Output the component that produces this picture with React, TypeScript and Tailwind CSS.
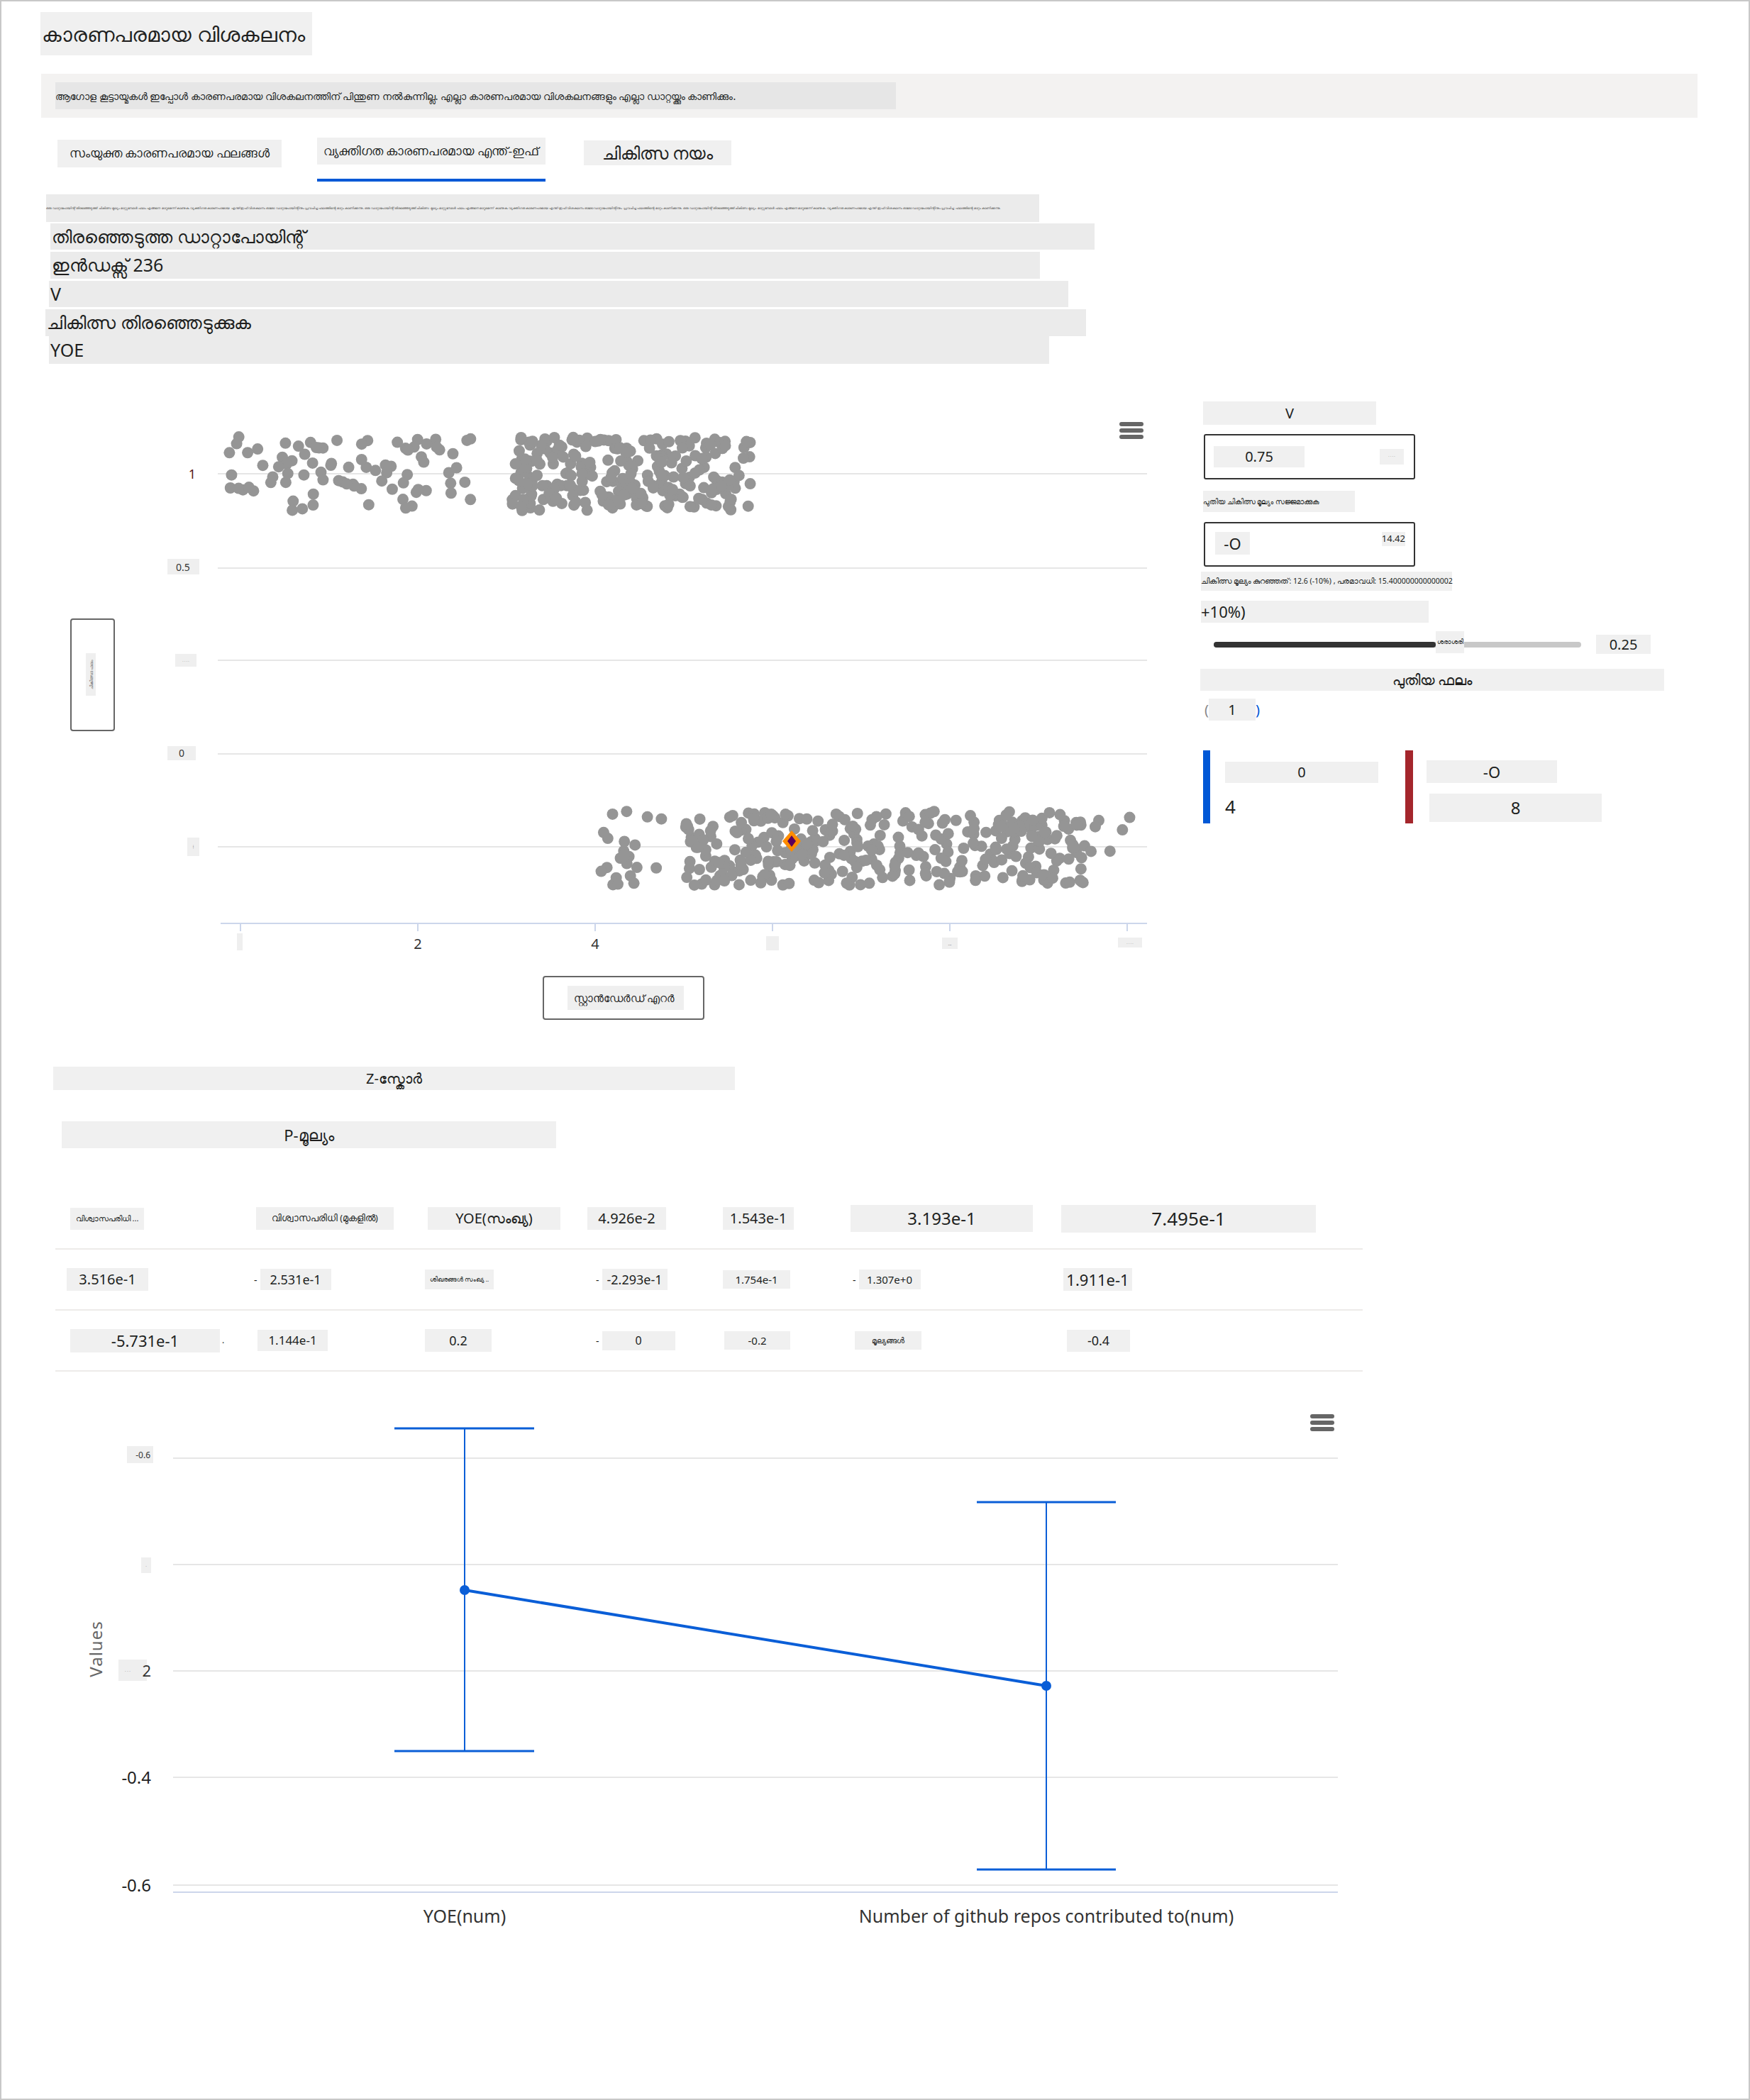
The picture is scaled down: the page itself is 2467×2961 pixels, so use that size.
import React from 'react';

const GRAY = 'bg-[#f0f0f0]';

function rng(seed: number) {
  let s = seed;
  return () => {
    s = (s * 1664525 + 1013904223) % 4294967296;
    return s / 4294967296;
  };
}

type Pt = { x: number; y: number };

function cluster(seed: number, n: number, x0: number, x1: number, yc: number, spread: number): Pt[] {
  const r = rng(seed);
  const out: Pt[] = [];
  for (let i = 0; i < n; i++) {
    out.push({ x: x0 + r() * (x1 - x0), y: yc + (r() - 0.5) * 2 * spread });
  }
  return out;
}

const points: Pt[] = [
  ...cluster(11, 85, 312, 670, 668, 52),
  ...cluster(23, 250, 722, 1058, 668, 52),
  ...cluster(37, 22, 846, 960, 1196, 52),
  ...cluster(41, 330, 960, 1530, 1196, 52),
  ...cluster(53, 6, 1530, 1604, 1190, 40),
];

function Hamburger({ x, y }: { x: number; y: number }) {
  return (
    <g fill="#666">
      <rect x={x} y={y} width={34} height={6} rx={3} />
      <rect x={x} y={y + 9} width={34} height={6} rx={3} />
      <rect x={x} y={y + 18} width={34} height={6} rx={3} />
    </g>
  );
}

function ScatterChart() {
  const grid = [668, 801, 931, 1063, 1194];
  const ticks = [339, 589, 839, 1089, 1339, 1589];
  return (
    <svg width={1580} height={890} viewBox="60 560 1580 890" className="shrink-0">
      {grid.map((g) => (
        <line key={g} x1={307} x2={1617} y1={g} y2={g} stroke="#e6e6e6" strokeWidth={2} />
      ))}
      <line x1={311} x2={1617} y1={1302} y2={1302} stroke="#ccd6eb" strokeWidth={2} />
      {ticks.map((t) => (
        <line key={t} x1={t} x2={t} y1={1302} y2={1313} stroke="#ccd6eb" strokeWidth={2} />
      ))}
      {/* y labels */}
      <text x={276} y={675} fontSize={18} fill="#5a1a1a" textAnchor="end">1</text>
      <rect x={236} y={788} width={45} height={22} fill="#efefef" />
      <text x={258} y={805} fontSize={14} fill="#333" textAnchor="middle">0.5</text>
      <rect x={247} y={922} width={30} height={18} fill="#efefef" />
      <text x={262} y={934} fontSize={5} fill="#555" textAnchor="middle">· · · ·</text>
      <rect x={236} y={1052} width={40} height={20} fill="#efefef" />
      <text x={256} y={1067} fontSize={14} fill="#333" textAnchor="middle">0</text>
      <rect x={264} y={1181} width={17} height={26} fill="#efefef" />
      <text x={272} y={1196} fontSize={5} fill="#555" textAnchor="middle" transform="rotate(-90 272 1194)">····</text>
      {/* x labels */}
      <rect x={334} y={1316} width={8} height={24} fill="#efefef" />
      <text x={589} y={1338} fontSize={20} fill="#333" textAnchor="middle">2</text>
      <text x={839} y={1338} fontSize={20} fill="#333" textAnchor="middle">4</text>
      <rect x={1080} y={1320} width={18} height={20} fill="#efefef" />
      <rect x={1328} y={1322} width={22} height={16} fill="#efefef" />
      <text x={1339} y={1333} fontSize={6} fill="#555" textAnchor="middle">...</text>
      <rect x={1576} y={1322} width={34} height={14} fill="#efefef" />
      <text x={1593} y={1332} fontSize={5} fill="#555" textAnchor="middle">· · · ·</text>
      {/* points */}
      {points.map((p, i) => (
        <circle key={i} cx={p.x} cy={p.y} r={8} fill="#959595" />
      ))}
      <polygon points="1116,1171 1129,1186 1116,1201 1103,1186" fill="#ff8c00" />
      <polygon points="1116,1178 1122,1186 1116,1194 1110,1186" fill="#5c005c" />
      {/* y axis title box */}
      <rect x={100} y={873} width={61} height={157} rx={3} fill="#fff" stroke="#666" strokeWidth={2} />
      <rect x={121} y={921} width={14} height={60} fill="#efefef" />
      <text x={131} y={951} fontSize={6} fill="#555" textAnchor="middle" transform="rotate(-90 131 951)">
        ചികിത്സാ ഫലം
      </text>
      {/* x axis title box */}
      <rect x={766} y={1377} width={226} height={60} rx={3} fill="#fff" stroke="#666" strokeWidth={2} />
      <rect x={800} y={1390} width={164} height={34} fill="#efefef" />
      <text x={880} y={1413} fontSize={15} fill="#222" textAnchor="middle">സ്റ്റാൻഡേർഡ് എറർ</text>
      <Hamburger x={1578} y={595} />
    </svg>
  );
}

function ErrorChart() {
  const grid = [2058, 2208, 2358, 2508, 2660];
  const blue = '#0a5ed7';
  return (
    <svg width={1860} height={780} viewBox="80 1960 1860 780" className="shrink-0">
      {grid.map((g) => (
        <line key={g} x1={244} x2={1886} y1={g} y2={g} stroke="#e6e6e6" strokeWidth={2} />
      ))}
      <line x1={244} x2={1886} y1={2670} y2={2670} stroke="#ccd6eb" strokeWidth={2} />
      <rect x={179} y={2041} width={37} height={24} fill="#efefef" />
      <text x={212} y={2058} fontSize={12} fill="#333" textAnchor="end">-0.6</text>
      <rect x={199} y={2198} width={14} height={22} fill="#efefef" />
      <text x={206} y={2212} fontSize={6} fill="#555" textAnchor="middle">·</text>
      <rect x={167} y={2342} width={40} height={30} fill="#efefef" />
      <text x={180} y={2360} fontSize={6} fill="#555" textAnchor="middle">· · ·</text>
      <text x={213} y={2366} fontSize={22} fill="#333" textAnchor="end">2</text>
      <text x={213} y={2517} fontSize={24} fill="#222" textAnchor="end">-0.4</text>
      <text x={213} y={2669} fontSize={24} fill="#222" textAnchor="end">-0.6</text>
      <text x={144} y={2327} fontSize={24} fill="#666" textAnchor="middle" letterSpacing={1} transform="rotate(-90 144 2327)">
        Values
      </text>
      {/* error bars */}
      <line x1={655} x2={655} y1={2016} y2={2471} stroke={blue} strokeWidth={2} />
      <line x1={556} x2={753} y1={2016} y2={2016} stroke={blue} strokeWidth={3} />
      <line x1={556} x2={753} y1={2471} y2={2471} stroke={blue} strokeWidth={3} />
      <line x1={1475} x2={1475} y1={2120} y2={2638} stroke={blue} strokeWidth={2} />
      <line x1={1377} x2={1573} y1={2120} y2={2120} stroke={blue} strokeWidth={3} />
      <line x1={1377} x2={1573} y1={2638} y2={2638} stroke={blue} strokeWidth={3} />
      <line x1={655} x2={1475} y1={2244} y2={2379} stroke={blue} strokeWidth={4} />
      <circle cx={655} cy={2244} r={7} fill={blue} />
      <circle cx={1475} cy={2379} r={7} fill={blue} />
      <text x={655} y={2713} fontSize={25} fill="#333" textAnchor="middle">YOE(num)</text>
      <text x={1475} y={2713} fontSize={25} fill="#333" textAnchor="middle">Number of github repos contributed to(num)</text>
      <Hamburger x={1847} y={1996} />
    </svg>
  );
}

function RightPanel() {
  return (
    <div className="ml-[52px] flex w-[660px] flex-col pt-[6px] text-[#201f1e]">
      <div className={`ml-[4px] flex h-[33px] w-[244px] items-center justify-center ${GRAY} text-[20px]`}>V</div>
      <div className="ml-[5px] mt-[13px] flex h-[64px] w-[298px] items-center justify-between rounded-[3px] border-2 border-[#333]">
        <div className={`ml-[12px] flex h-[30px] w-[128px] items-center justify-center ${GRAY} text-[20px]`}>0.75</div>
        <div className={`mr-[14px] flex h-[22px] w-[34px] items-center justify-center ${GRAY} text-[5px] text-[#555]`}>
          · · · ·
        </div>
      </div>
      <div className={`ml-[4px] mt-[16px] flex h-[30px] w-[214px] items-center ${GRAY} text-[10px] whitespace-nowrap`}>
        പുതിയ ചികിത്സ മൂല്യം സജ്ജമാക്കുക
      </div>
      <div className="ml-[5px] mt-[14px] flex h-[63px] w-[298px] items-start justify-between rounded-[3px] border-2 border-[#333]">
        <div className={`ml-[14px] mt-[12px] flex h-[32px] w-[49px] items-center justify-center ${GRAY} text-[22px]`}>-O</div>
        <div className={`mr-[12px] mt-[12px] flex h-[20px] items-center ${GRAY} text-[13px]`}>14.42</div>
      </div>
      <div className={`ml-[1px] mt-[7px] flex h-[27px] w-[354px] items-center ${GRAY} text-[10.5px] whitespace-nowrap`}>
        ചികിത്സ മൂല്യം കുറഞ്ഞത്: 12.6 (-10%) , പരമാവധി: 15.400000000000002
      </div>
      <div className={`ml-[1px] mt-[14px] flex h-[31px] w-[321px] items-center ${GRAY} text-[22px]`}>+10%)</div>
      <div className="mt-[15px] flex h-[31px] items-center">
        <div className="relative ml-[19px] flex h-[8px] w-[518px] rounded-full bg-[#c8c8c8]">
          <div className="h-[8px] w-[313px] rounded-full bg-[#333]" />
          <div className={`absolute left-[313px] top-[-15px] flex h-[31px] w-[40px] items-center justify-center ${GRAY} text-[9px]`}>
            ശരാശരി
          </div>
        </div>
        <div className={`ml-[21px] flex h-[27px] w-[77px] items-center justify-center ${GRAY} text-[20px]`}>0.25</div>
      </div>
      <div className={`mt-[19px] flex h-[31px] w-[654px] items-center justify-center ${GRAY} text-[20px] font-medium`}>
        പുതിയ ഫലം
      </div>
      <div className="ml-[6px] mt-[11px] flex h-[31px] items-center text-[20px]">
        <span className="text-[#888]">(</span>
        <div className={`flex h-[31px] w-[66px] items-center justify-center ${GRAY}`}>1</div>
        <span className="text-[#0058d6]">)</span>
      </div>
      <div className="mt-[42px] flex h-[103px]">
        <div className="ml-[4px] h-[103px] w-[10px] bg-[#0058d6]" />
        <div className="ml-[21px] flex w-[216px] flex-col">
          <div className={`mt-[16px] flex h-[30px] w-[216px] items-center justify-center ${GRAY} text-[20px]`}>0</div>
          <div className="mt-[18px] text-[26px] leading-[30px]">4</div>
        </div>
        <div className="ml-[38px] h-[103px] w-[11px] bg-[#a4262c]" />
        <div className="ml-[19px] flex flex-col">
          <div className={`mt-[14px] flex h-[32px] w-[184px] items-center justify-center ${GRAY} text-[22px]`}>-O</div>
          <div className={`ml-[4px] mt-[15px] flex h-[40px] w-[243px] items-center justify-center ${GRAY} text-[24px]`}>8</div>
        </div>
      </div>
    </div>
  );
}

const COLS = 'grid grid-cols-[277px_240px_230px_190px_180px_295px_431px]';

function Cell({ ml, w, h, size, children, dash }: { ml: number; w: number; h: number; size: number; children: React.ReactNode; dash?: boolean }) {
  return (
    <div className="flex items-center" style={{ marginLeft: ml }}>
      {dash && <span className="mr-[4px] text-[14px]">-</span>}
      <div className={`flex items-center justify-center whitespace-nowrap ${GRAY}`} style={{ width: w, height: h, fontSize: size }}>
        {children}
      </div>
    </div>
  );
}

function Table() {
  return (
    <div className="ml-[76px] mt-[57px] w-[1843px] text-[#201f1e]">
      <div className={`${COLS} h-[86px] items-center border-b-2 border-[#edebe9]`}>
        <Cell ml={21} w={104} h={31} size={11}>വിശ്വാസപരിധി ...</Cell>
        <Cell ml={6} w={194} h={32} size={12.5}>വിശ്വാസപരിധി (മുകളിൽ)</Cell>
        <Cell ml={8} w={187} h={32} size={20}>YOE(സംഖ്യ)</Cell>
        <Cell ml={3} w={111} h={32} size={20}>4.926e-2</Cell>
        <Cell ml={4} w={100} h={32} size={20}>1.543e-1</Cell>
        <Cell ml={4} w={257} h={38} size={24}>3.193e-1</Cell>
        <Cell ml={6} w={359} h={39} size={26}>7.495e-1</Cell>
      </div>
      <div className={`${COLS} h-[86px] items-center border-b-2 border-[#edebe9]`}>
        <Cell ml={16} w={115} h={32} size={20}>3.516e-1</Cell>
        <Cell ml={3} w={100} h={30} size={18} dash>2.531e-1</Cell>
        <Cell ml={4} w={97} h={28} size={9}>ശിഖരങ്ങൾ സംഖ്യ ..</Cell>
        <Cell ml={15} w={92} h={30} size={18} dash>-2.293e-1</Cell>
        <Cell ml={4} w={95} h={26} size={15}>1.754e-1</Cell>
        <Cell ml={7} w={87} h={28} size={15} dash>1.307e+0</Cell>
        <Cell ml={9} w={97} h={32} size={22}>1.911e-1</Cell>
      </div>
      <div className={`${COLS} h-[86px] items-center border-b-2 border-[#edebe9]`}>
        <div className="flex items-center">
          <Cell ml={21} w={211} h={33} size={22}>-5.731e-1</Cell>
          <span className="ml-[3px] text-[12px]">.</span>
        </div>
        <Cell ml={8} w={99} h={30} size={17}>1.144e-1</Cell>
        <Cell ml={4} w={94} h={32} size={18}>0.2</Cell>
        <Cell ml={15} w={103} h={27} size={16} dash>0</Cell>
        <Cell ml={6} w={93} h={26} size={15}>-0.2</Cell>
        <Cell ml={10} w={94} h={26} size={11}>മൂല്യങ്ങൾ</Cell>
        <Cell ml={14} w={89} h={31} size={18}>-0.4</Cell>
      </div>
    </div>
  );
}

const tinyText =
  'ഒരു ഡാറ്റാപോയിന്റ് തിരഞ്ഞെടുത്ത് ചികിത്സ മൂല്യം മാറ്റുമ്പോൾ ഫലം എങ്ങനെ മാറുമെന്ന് കാണുക. വ്യക്തിഗത കാരണപരമായ എന്ത്-ഇഫ് വിശകലനം ഓരോ ഡാറ്റാപോയിന്റിനും പ്രവചിച്ച ഫലത്തിന്റെ മാറ്റം കാണിക്കുന്നു. ';

export default function App() {
  return (
    <div className="relative h-[2961px] w-[2467px] overflow-hidden border-2 border-[#c8c8c8] bg-white font-['Noto_Sans','Open_Sans','DejaVu_Sans',sans-serif] text-[#201f1e]">
      <div className={`ml-[55px] mt-[15px] flex h-[61px] w-[383px] items-center whitespace-nowrap ${GRAY} pl-[2px] text-[29px]`}>
        കാരണപരമായ വിശകലനം
      </div>
      <div className="ml-[56px] mt-[26px] flex h-[62px] w-[2335px] items-center bg-[#f3f2f1] pl-[20px]">
        <div className="flex h-[38px] w-[1185px] items-center whitespace-nowrap bg-[#e6e6e6] text-[14px]">
          ആഗോള കൂട്ടായ്മകൾ ഇപ്പോൾ കാരണപരമായ വിശകലനത്തിന് പിന്തുണ നൽകുന്നില്ല. എല്ലാ കാരണപരമായ വിശകലനങ്ങളും എല്ലാ ഡാറ്റയ്ക്കും കാണിക്കും.
        </div>
      </div>
      <div className="mt-[28px] flex h-[62px] items-start">
        <div className={`ml-[79px] mt-[3px] flex h-[39px] w-[316px] items-center justify-center whitespace-nowrap ${GRAY} text-[16.5px]`}>
          സംയുക്ത കാരണപരമായ ഫലങ്ങൾ
        </div>
        <div className="ml-[50px] flex w-[322px] flex-col">
          <div className={`flex h-[38px] items-center justify-center whitespace-nowrap ${GRAY} text-[16.5px]`}>വ്യക്തിഗത കാരണപരമായ എന്ത്-ഇഫ്</div>
          <div className="mt-[20px] h-[4px] bg-[#0058d6]" />
        </div>
        <div className={`ml-[54px] mt-[4px] flex h-[35px] w-[208px] items-center justify-center ${GRAY} text-[24px]`}>
          ചികിത്സ നയം
        </div>
      </div>
      <div className="mt-[18px] flex flex-col text-[25px]">
        <div className="ml-[63px] flex h-[39px] w-[1400px] items-center whitespace-nowrap bg-[#ebebeb] text-[4.6px] text-[#444]">
          {tinyText + tinyText + tinyText}
        </div>
        <div className="ml-[69px] mt-[2px] flex h-[37px] w-[1472px] items-center bg-[#ebebeb] pl-[2px]">തിരഞ്ഞെടുത്ത ഡാറ്റാപോയിന്റ്</div>
        <div className="ml-[69px] mt-[3px] flex h-[38px] w-[1395px] items-center bg-[#ebebeb] pl-[2px]">ഇൻഡക്സ് 236</div>
        <div className="ml-[67px] mt-[3px] flex h-[37px] w-[1437px] items-center bg-[#ebebeb] pl-[2px]">V</div>
        <div className="ml-[62px] mt-[3px] flex h-[38px] w-[1467px] items-center bg-[#ebebeb] pl-[2px]">ചികിത്സ തിരഞ്ഞെടുക്കുക</div>
        <div className="ml-[67px] flex h-[39px] w-[1410px] items-center bg-[#ebebeb] pl-[2px]">YOE</div>
      </div>
      <div className="mt-[47px] flex items-start">
        <div className="ml-[58px]">
          <ScatterChart />
        </div>
        <RightPanel />
      </div>
      <div className={`ml-[73px] mt-[54px] flex h-[33px] w-[961px] items-center justify-center ${GRAY} text-[20px]`}>Z-സ്കോർ</div>
      <div className={`ml-[85px] mt-[44px] flex h-[38px] w-[697px] items-center justify-center ${GRAY} text-[22px]`}>P-മൂല്യം</div>
      <Table />
      <div className="ml-[78px] mt-[24px]">
        <ErrorChart />
      </div>
    </div>
  );
}
